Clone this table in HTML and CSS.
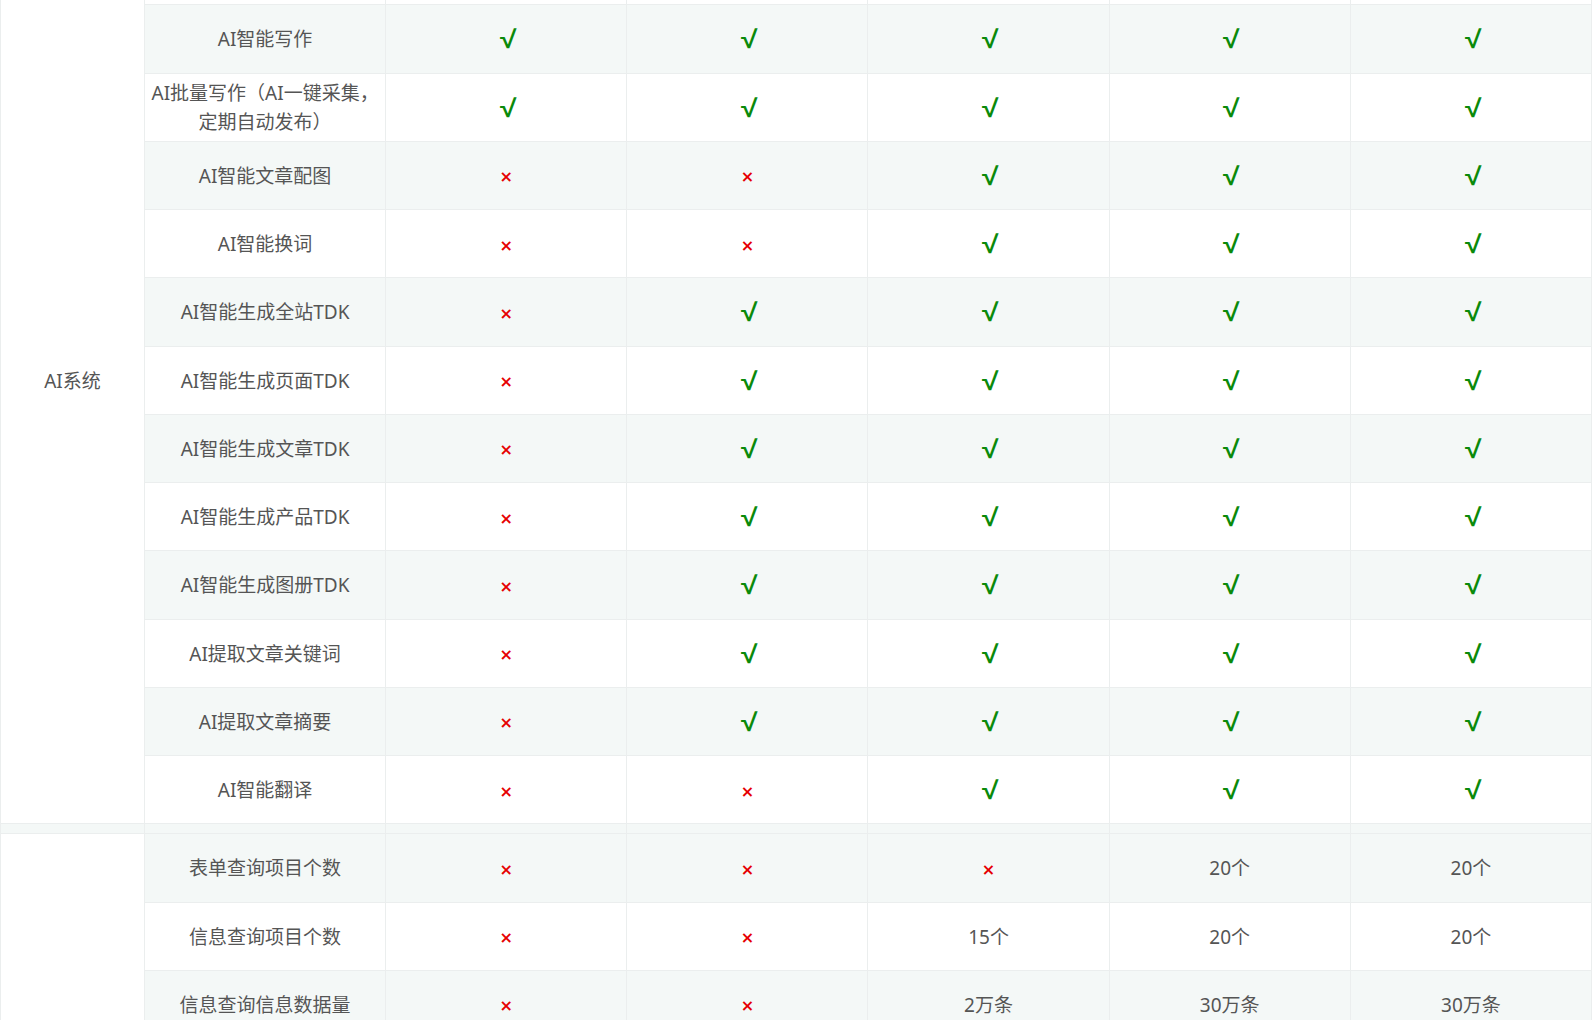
FILE: index.html
```html
<!DOCTYPE html>
<html lang="zh-CN">
<head>
<meta charset="utf-8">
<title>功能对比</title>
<link rel="stylesheet" href="styles.css">
</head>
<body>
<div class="page">
<table class="cmp">
<colgroup>
<col class="c-group"><col class="c-name"><col><col><col><col><col>
</colgroup>
<tbody>
<tr class="w"><td class="grp" rowspan="13">AI系统</td><td class="name"></td><td></td><td></td><td></td><td></td><td></td></tr>
<tr class="g"><td class="name">AI智能写作</td><td><span class="yes">√</span></td><td><span class="yes">√</span></td><td><span class="yes">√</span></td><td><span class="yes">√</span></td><td><span class="yes">√</span></td></tr>
<tr class="w"><td class="name">AI批量写作（AI一键采集，定期自动发布）</td><td><span class="yes">√</span></td><td><span class="yes">√</span></td><td><span class="yes">√</span></td><td><span class="yes">√</span></td><td><span class="yes">√</span></td></tr>
<tr class="g"><td class="name">AI智能文章配图</td><td><span class="no">×</span></td><td><span class="no">×</span></td><td><span class="yes">√</span></td><td><span class="yes">√</span></td><td><span class="yes">√</span></td></tr>
<tr class="w"><td class="name">AI智能换词</td><td><span class="no">×</span></td><td><span class="no">×</span></td><td><span class="yes">√</span></td><td><span class="yes">√</span></td><td><span class="yes">√</span></td></tr>
<tr class="g"><td class="name">AI智能生成全站TDK</td><td><span class="no">×</span></td><td><span class="yes">√</span></td><td><span class="yes">√</span></td><td><span class="yes">√</span></td><td><span class="yes">√</span></td></tr>
<tr class="w"><td class="name">AI智能生成页面TDK</td><td><span class="no">×</span></td><td><span class="yes">√</span></td><td><span class="yes">√</span></td><td><span class="yes">√</span></td><td><span class="yes">√</span></td></tr>
<tr class="g"><td class="name">AI智能生成文章TDK</td><td><span class="no">×</span></td><td><span class="yes">√</span></td><td><span class="yes">√</span></td><td><span class="yes">√</span></td><td><span class="yes">√</span></td></tr>
<tr class="w"><td class="name">AI智能生成产品TDK</td><td><span class="no">×</span></td><td><span class="yes">√</span></td><td><span class="yes">√</span></td><td><span class="yes">√</span></td><td><span class="yes">√</span></td></tr>
<tr class="g"><td class="name">AI智能生成图册TDK</td><td><span class="no">×</span></td><td><span class="yes">√</span></td><td><span class="yes">√</span></td><td><span class="yes">√</span></td><td><span class="yes">√</span></td></tr>
<tr class="w"><td class="name">AI提取文章关键词</td><td><span class="no">×</span></td><td><span class="yes">√</span></td><td><span class="yes">√</span></td><td><span class="yes">√</span></td><td><span class="yes">√</span></td></tr>
<tr class="g"><td class="name">AI提取文章摘要</td><td><span class="no">×</span></td><td><span class="yes">√</span></td><td><span class="yes">√</span></td><td><span class="yes">√</span></td><td><span class="yes">√</span></td></tr>
<tr class="w"><td class="name">AI智能翻译</td><td><span class="no">×</span></td><td><span class="no">×</span></td><td><span class="yes">√</span></td><td><span class="yes">√</span></td><td><span class="yes">√</span></td></tr>
<tr class="gap"><td></td><td></td><td></td><td></td><td></td><td></td><td></td></tr>
<tr class="g"><td class="grp" rowspan="3"></td><td class="name">表单查询项目个数</td><td><span class="no">×</span></td><td><span class="no">×</span></td><td><span class="no">×</span></td><td>20个</td><td>20个</td></tr>
<tr class="w"><td class="name">信息查询项目个数</td><td><span class="no">×</span></td><td><span class="no">×</span></td><td>15个</td><td>20个</td><td>20个</td></tr>
<tr class="g"><td class="name">信息查询信息数据量</td><td><span class="no">×</span></td><td><span class="no">×</span></td><td>2万条</td><td>30万条</td><td>30万条</td></tr>
</tbody>
</table>
</div>
</body>
</html>
```

FILE: styles.css
```css
html, body {
  margin: 0;
  padding: 0;
  background: #ffffff;
  overflow: hidden;
}
body {
  font-family: "Noto Sans", "Noto Sans CJK SC", sans-serif;
  color: #555555;
}
.page {
  margin-top: -64px;
}
.cmp {
  width: 1592px;
  table-layout: fixed;
  border-collapse: collapse;
  font-size: 19px;
  line-height: 29px;
}
.c-group {
  width: 144px;
}
.cmp td {
  border: 1px solid #ebeeee;
  text-align: center;
  vertical-align: middle;
  padding: 2px 5px 0;
  height: 68.25px;
  box-sizing: border-box;
}
.cmp tr.g td {
  background: #f4f8f7;
}
.cmp tr.w td {
  background: #ffffff;
}
.cmp td.grp {
  background: #ffffff !important;
}
.cmp tr.gap td {
  height: 10px;
  background: #f4f8f7;
  padding: 0;
}
.yes {
  display: inline-block;
  color: #0a8a0a;
  font-weight: bold;
  font-size: 25px;
  font-family: "Liberation Sans", sans-serif;
  transform: scaleX(1.2);
  padding: 2px 0 0 3px;
}
.no {
  color: #e60000;
  font-size: 16px;
  font-weight: bold;
  font-family: "DejaVu Sans", sans-serif;
}
```
